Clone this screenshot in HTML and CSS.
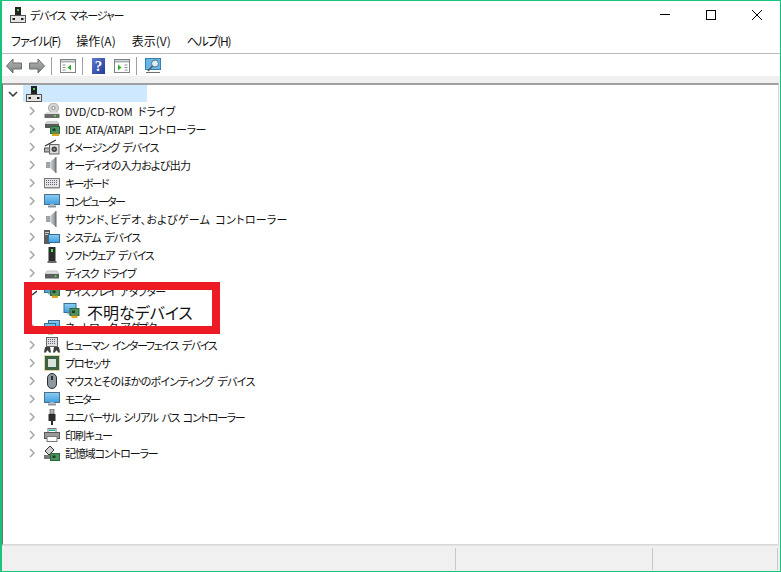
FILE: index.html
```html
<!DOCTYPE html>
<html lang="ja">
<head>
<meta charset="utf-8">
<title>デバイス マネージャー</title>
<link rel="stylesheet" href="styles.css">
</head>
<body>
<svg class="defs" width="0" height="0">
  <defs>
    <linearGradient id="g-arrow" x1="0" y1="0" x2="0" y2="1"><stop offset="0" stop-color="#b4b8b6"/><stop offset="1" stop-color="#7c807e"/></linearGradient>
    <linearGradient id="g-screen" x1="0" y1="0" x2="0" y2="1"><stop offset="0" stop-color="#8ccdf2"/><stop offset="1" stop-color="#3f9fe0"/></linearGradient>
    <linearGradient id="g-help" x1="0" y1="0" x2="1" y2="1"><stop offset="0" stop-color="#5c78cc"/><stop offset="1" stop-color="#243c98"/></linearGradient>
    <linearGradient id="g-spk" x1="0" y1="0" x2="1" y2="0"><stop offset="0" stop-color="#d8dadc"/><stop offset="1" stop-color="#7e8286"/></linearGradient>
    <symbol id="i-root" viewBox="0 0 16 16"><rect x="5" y="0" width="6" height="8" fill="#222"/><rect x="7" y="2" width="2" height="2" fill="#5c5"/><rect x="0.500" y="8.500" width="15" height="7" fill="#e4e4e4" stroke="#555"/><rect x="2.500" y="11" width="2.500" height="2" fill="#222"/><rect x="11" y="11" width="2.500" height="2" fill="#222"/></symbol>
    <symbol id="i-dvd" viewBox="0 0 16 16"><circle cx="9.500" cy="5" r="5" fill="#d4d4d4" stroke="#a8a8a8"/><circle cx="9.500" cy="5" r="1.600" fill="#fff" stroke="#888"/><path d="M3 9h11l2 2H0z" fill="#e0e0e0"/><rect x="0.500" y="11" width="15" height="4" fill="#6a6a6a"/><rect x="10" y="12" width="2" height="1.500" fill="#4e4"/></symbol>
    <symbol id="i-ide" viewBox="0 0 16 16"><path d="M3 0h10l2 3H1z" fill="#d8d8d8" stroke="#aaa" stroke-width=".5"/><rect x="1" y="3" width="14" height="4" fill="#5a5a5a"/><rect x="6.500" y="5.500" width="9" height="7" fill="#4c9060" stroke="#2c6a3c"/><rect x="8" y="12.500" width="7" height="2.500" fill="#d8a820"/><rect x="8.500" y="7.500" width="3" height="2.500" fill="#1d3d28"/></symbol>
    <symbol id="i-cam" viewBox="0 0 16 16"><path d="M1 7 12 1" stroke="#333" stroke-width="1.200"/><rect x="0.500" y="9" width="5" height="4" fill="#b4b4b4" stroke="#555"/><rect x="5.500" y="5.500" width="9.500" height="9.500" fill="#dcdcdc" stroke="#666"/><circle cx="10.300" cy="10.300" r="2.700" fill="#444"/><circle cx="10.300" cy="10.300" r="1" fill="#8ab"/></symbol>
    <symbol id="i-spk" viewBox="0 0 16 16"><rect x="2" y="5" width="4" height="6" fill="#a0a4a8"/><path d="M6 5l6-5v16l-6-5z" fill="url(#g-spk)"/><path d="M12 0v16" stroke="#666"/></symbol>
    <symbol id="i-kbd" viewBox="0 0 16 16"><rect x="0.500" y="3.500" width="15" height="9" fill="#e2e4e8" stroke="#777"/><path d="M2 5.500h12M2 7.500h12M2 9.500h12" stroke="#667" stroke-dasharray="1 1"/><rect x="0.500" y="12" width="15" height="1.500" fill="#8a8a8a"/></symbol>
    <symbol id="i-mon" viewBox="0 0 16 16"><rect x="0.500" y="1.500" width="15" height="10" fill="url(#g-screen)" stroke="#4a6f8c"/><path d="M4 13.500h8" stroke="#8a94a0" stroke-width="2"/><path d="M6 12h4" stroke="#b0b8c0" stroke-width="2"/></symbol>
    <symbol id="i-sys" viewBox="0 0 16 16"><rect x="0" y="1" width="6" height="14" fill="#5c5c5c"/><rect x="1" y="3" width="4" height="1" fill="#ccc"/><rect x="1" y="5" width="4" height="1" fill="#ccc"/><rect x="4.500" y="5.500" width="11" height="8" fill="url(#g-screen)" stroke="#2f6f96"/></symbol>
    <symbol id="i-sw" viewBox="0 0 16 16"><rect x="4.500" y="0" width="7" height="14" fill="#2c2c2c"/><rect x="7" y="2" width="2" height="3" fill="#4e4"/><rect x="3.500" y="14" width="9" height="2" fill="#6a6a6a"/></symbol>
    <symbol id="i-disk" viewBox="0 0 16 16"><path d="M3 6h10l2 3H1z" fill="#e0e0e0" stroke="#aaa" stroke-width=".6"/><rect x="1" y="9" width="14" height="4.500" fill="#5e5e5e"/><rect x="10.500" y="10.500" width="2" height="1.500" fill="#4e4"/></symbol>
    <symbol id="i-disp" viewBox="0 0 16 16"><rect x="0.500" y="0.500" width="12" height="9" fill="url(#g-screen)" stroke="#3a6f90"/><rect x="4" y="9.500" width="3" height="2" fill="#9ab"/><rect x="6.500" y="5.500" width="9" height="7" fill="#4c9060" stroke="#2c6a3c"/><rect x="8" y="12.500" width="6" height="2.500" fill="#e0aa20"/><rect x="8.500" y="7.500" width="3" height="2.500" fill="#1d3d28"/></symbol>
    <symbol id="i-net" viewBox="0 0 16 16"><rect x="4.500" y="1.500" width="11" height="8" fill="url(#g-screen)" stroke="#3a6f90"/><rect x="0.500" y="4.500" width="11" height="8" fill="#6cc0f0" stroke="#3a6f90"/><rect x="4" y="13" width="5" height="2.500" fill="#5b5"/></symbol>
    <symbol id="i-hid" viewBox="0 0 16 16"><rect x="2.500" y="0.500" width="11" height="9" fill="#dfe1e6" stroke="#666"/><path d="M4 2.500h8M4 4.500h8M4 6.500h8" stroke="#667" stroke-dasharray="1 1"/><path d="M0 15.500 1 10h5l1 5.500H5l-1-2H3l-1 2zM9 15.500 10 10h5l1 5.500h-2l-1-2h-1l-1 2z" fill="#3c3c3c"/></symbol>
    <symbol id="i-cpu" viewBox="0 0 16 16"><rect x="1" y="1" width="14" height="14" fill="#3c5f48" /><rect x="0.500" y="0.500" width="15" height="15" fill="none" stroke="#c8a83c" stroke-dasharray="1 1"/><rect x="4" y="4" width="8" height="8" fill="#dbe2de"/></symbol>
    <symbol id="i-mouse" viewBox="0 0 16 16"><rect x="3.500" y="0.500" width="9" height="15" rx="4.500" fill="#8e98a0" stroke="#2c2c2c"/><rect x="7" y="3" width="2" height="4" fill="#2c2c2c"/></symbol>
    <symbol id="i-usb" viewBox="0 0 16 16"><rect x="6" y="0" width="4" height="5" fill="#b4b4b4" stroke="#444" stroke-width=".6"/><rect x="4.500" y="5" width="7" height="7" fill="#2c2c2c"/><rect x="7" y="12" width="2" height="4" fill="#2c2c2c"/></symbol>
    <symbol id="i-prn" viewBox="0 0 16 16"><rect x="4" y="1.500" width="8" height="4" fill="#fff" stroke="#777"/><rect x="5" y="2.500" width="6" height="1.500" fill="#2a9"/><rect x="0.500" y="5.500" width="15" height="6" fill="#9a9a9a" stroke="#555"/><rect x="3" y="9.500" width="10" height="5" fill="#fff" stroke="#777"/></symbol>
    <symbol id="i-stor" viewBox="0 0 16 16"><path d="M1 6 6 1l4 4-5 5z" fill="#d0d0d0" stroke="#333"/><rect x="0" y="10" width="8" height="4" fill="#777"/><rect x="6.500" y="8.500" width="9" height="7" fill="#4c9060" stroke="#2c6a3c"/><rect x="8.500" y="10.500" width="3" height="2.500" fill="#1d3d28"/></symbol>
  </defs>
</svg>
<div class="window">
  <header class="titlebar">
    <svg class="app-icon"><use href="#i-root"/></svg>
    <span class="title">デバイス マネージャー</span>
    <div class="caption">
      <svg class="cap" viewBox="0 0 12 12"><path d="M1 5.500h10" stroke="#000"/></svg>
      <svg class="cap" viewBox="0 0 12 12"><rect x="1.500" y="1.500" width="9" height="9" fill="none" stroke="#000"/></svg>
      <svg class="cap" viewBox="0 0 12 12"><path d="M1 1l10 10M11 1 1 11" stroke="#000"/></svg>
    </div>
  </header>
  <nav class="menubar">
    <span class="kana">ファイル(F)</span><span>操作(A)</span><span>表示(V)</span><span class="help-menu">ヘルプ(H)</span>
  </nav>
  <div class="toolbar">
    <svg class="tool back" viewBox="0 0 16 16"><path d="M.5 8 7 1v4h8.500v6H7v4z" fill="url(#g-arrow)" stroke="#6a6e6c"/></svg>
    <svg class="tool" viewBox="0 0 16 16"><path d="M15.500 8 9 1v4H.5v6H9v4z" fill="url(#g-arrow)" stroke="#6a6e6c"/></svg>
    <i class="sep"></i>
    <svg class="tool" viewBox="0 0 16 16"><rect x="0.500" y="1.500" width="15" height="13" fill="#fff" stroke="#7c8488"/><path d="M1 3.500h14" stroke="#a8b0b4" stroke-width="2"/><path d="M2.500 7h3M2.500 9.500h3M2.500 12h3" stroke="#8a9296"/><path d="M11 6.500v6L7.500 9.500z" fill="#2fae2f"/></svg>
    <i class="sep"></i>
    <svg class="tool help" viewBox="0 0 13 16"><rect width="13" height="16" fill="url(#g-help)"/><text x="6.500" y="13" class="q">?</text></svg>
    <svg class="tool" viewBox="0 0 16 16"><rect x="0.500" y="1.500" width="15" height="13" fill="#fff" stroke="#7c8488"/><path d="M1 3.500h14" stroke="#a8b0b4" stroke-width="2"/><path d="M10.500 7h3M10.500 9.500h3M10.500 12h3" stroke="#8a9296"/><path d="M4 6.500v6l3.500-3z" fill="#2fae2f"/></svg>
    <i class="sep"></i>
    <svg class="tool" viewBox="0 0 16 16"><rect x="0.500" y="0.500" width="15" height="11" fill="#62b8ec" stroke="#3a7fa8"/><circle cx="10" cy="5.500" r="3.500" fill="#d8eef9" stroke="#6a7074"/><path d="M7.500 8 3 13" stroke="#555" stroke-width="1.500"/><path d="M1 14.500h14" stroke="#6a7074"/></svg>
  </div>
  <div class="band"></div>
  <main class="tree">
    <div class="row root">
      <svg class="arrow open" viewBox="0 0 10 10"><path d="M1 3l4 4 4-4"/></svg>
      <div class="root-sel"><svg class="icon"><use href="#i-root"/></svg></div>
    </div>
    <ul class="list">
      <li class="row"><svg class="arrow" viewBox="0 0 10 10"><path d="M3 1l4 4-4 4"/></svg><svg class="icon"><use href="#i-dvd"/></svg><span class="latin">DVD/CD-ROM ドライブ</span></li>
      <li class="row"><svg class="arrow" viewBox="0 0 10 10"><path d="M3 1l4 4-4 4"/></svg><svg class="icon"><use href="#i-ide"/></svg><span class="ide">IDE ATA/ATAPI コントローラー</span></li>
      <li class="row"><svg class="arrow" viewBox="0 0 10 10"><path d="M3 1l4 4-4 4"/></svg><svg class="icon"><use href="#i-cam"/></svg><span>イメージング デバイス</span></li>
      <li class="row"><svg class="arrow" viewBox="0 0 10 10"><path d="M3 1l4 4-4 4"/></svg><svg class="icon"><use href="#i-spk"/></svg><span class="wide">オーディオの入力および出力</span></li>
      <li class="row"><svg class="arrow" viewBox="0 0 10 10"><path d="M3 1l4 4-4 4"/></svg><svg class="icon"><use href="#i-kbd"/></svg><span class="tight">キーボード</span></li>
      <li class="row"><svg class="arrow" viewBox="0 0 10 10"><path d="M3 1l4 4-4 4"/></svg><svg class="icon"><use href="#i-mon"/></svg><span class="tight">コンピューター</span></li>
      <li class="row"><svg class="arrow" viewBox="0 0 10 10"><path d="M3 1l4 4-4 4"/></svg><svg class="icon"><use href="#i-spk"/></svg><span class="sound">サウンド、ビデオ、およびゲーム コントローラー</span></li>
      <li class="row"><svg class="arrow" viewBox="0 0 10 10"><path d="M3 1l4 4-4 4"/></svg><svg class="icon"><use href="#i-sys"/></svg><span>システム デバイス</span></li>
      <li class="row"><svg class="arrow" viewBox="0 0 10 10"><path d="M3 1l4 4-4 4"/></svg><svg class="icon"><use href="#i-sw"/></svg><span>ソフトウェア デバイス</span></li>
      <li class="row"><svg class="arrow" viewBox="0 0 10 10"><path d="M3 1l4 4-4 4"/></svg><svg class="icon"><use href="#i-disk"/></svg><span>ディスク ドライブ</span></li>
      <li class="row"><svg class="arrow exp" viewBox="0 0 10 10"><path d="M5 9l5-4"/></svg><svg class="icon"><use href="#i-disp"/></svg><span>ディスプレイ アダプター</span></li>
      <li class="row"></li>
      <li class="row"><svg class="arrow" viewBox="0 0 10 10"><path d="M3 1l4 4-4 4"/></svg><svg class="icon"><use href="#i-net"/></svg><span>ネットワーク アダプター</span></li>
      <li class="row"><svg class="arrow" viewBox="0 0 10 10"><path d="M3 1l4 4-4 4"/></svg><svg class="icon"><use href="#i-hid"/></svg><span class="narrow">ヒューマン インターフェイス デバイス</span></li>
      <li class="row"><svg class="arrow" viewBox="0 0 10 10"><path d="M3 1l4 4-4 4"/></svg><svg class="icon"><use href="#i-cpu"/></svg><span>プロセッサ</span></li>
      <li class="row"><svg class="arrow" viewBox="0 0 10 10"><path d="M3 1l4 4-4 4"/></svg><svg class="icon"><use href="#i-mouse"/></svg><span class="wide">マウスとそのほかのポインティング デバイス</span></li>
      <li class="row"><svg class="arrow" viewBox="0 0 10 10"><path d="M3 1l4 4-4 4"/></svg><svg class="icon"><use href="#i-mon"/></svg><span class="tight">モニター</span></li>
      <li class="row"><svg class="arrow" viewBox="0 0 10 10"><path d="M3 1l4 4-4 4"/></svg><svg class="icon"><use href="#i-usb"/></svg><span class="narrow">ユニバーサル シリアル バス コントローラー</span></li>
      <li class="row"><svg class="arrow" viewBox="0 0 10 10"><path d="M3 1l4 4-4 4"/></svg><svg class="icon"><use href="#i-prn"/></svg><span>印刷キュー</span></li>
      <li class="row"><svg class="arrow" viewBox="0 0 10 10"><path d="M3 1l4 4-4 4"/></svg><svg class="icon"><use href="#i-stor"/></svg><span>記憶域コントローラー</span></li>
    </ul>
    <div class="callout">
      <svg class="callout-icon"><use href="#i-disp"/></svg>
      <span class="callout-text">不明なデバイス</span>
    </div>
  </main>
  <footer class="statusbar">
    <div class="st st1"></div><div class="st st2"></div><div class="st st3"></div>
  </footer>
</div>
</body>
</html>
```
FILE: styles.css
```css
html, body { margin: 0; padding: 0; height: 100%; overflow: hidden; }
body { font-family: "Noto Sans CJK JP", "Liberation Sans", sans-serif; font-feature-settings: "palt"; color: #111; background: #fff; }
.defs { position: absolute; }
.window { box-sizing: border-box; width: 781px; height: 572px; border: 1px solid #19c37d; border-left-width: 2px; display: flex; flex-direction: column; background: #fff; }
.titlebar { height: 28px; display: flex; align-items: center; padding-left: 8px; flex: none; }
.app-icon { width: 16px; height: 16px; flex: none; }
.title { font-size: 11px; line-height: 16px; margin-left: 4px; letter-spacing: -1.200px; word-spacing: 3px; }
.caption { margin-left: auto; display: flex; align-items: center; padding-right: 17px; gap: 34px; }
.cap { width: 12px; height: 12px; }
.menubar { height: 24px; flex: none; display: flex; gap: 16px; align-items: center; padding-left: 9px; font-size: 12px; line-height: 16px; border-bottom: 1px solid #b9b9c3; }
.menubar .kana { letter-spacing: -1px; }
.menubar .help-menu { letter-spacing: -1.300px; }
.toolbar { height: 22px; flex: none; display: flex; align-items: center; padding: 2px 0 0 4px; box-sizing: border-box; background: #fff; }
.tool { width: 16px; height: 16px; flex: none; }
.tool.back { margin-right: 7px; }
.tool.help { width: 13px; margin: 0 9px 0 1px; }
.sep { width: 1px; height: 18px; background: #a0a0a0; margin: 0 8px 0 6px; }
.q { font: bold 15px "Liberation Serif", serif; fill: #fff; text-anchor: middle; }
.band { height: 7px; flex: none; background: #f0f0f0; }
.tree { position: relative; flex: 1; min-height: 0; background: #fff; border-top: 2px solid #a0a0a0; border-left: 1px solid #6e6e6e; border-bottom: 1px solid #d8d8d8; border-right: 1px solid #d8d8d8; margin-right: 1px; }
.row { height: 18px; display: flex; align-items: center; font-size: 11px; line-height: 16px; white-space: nowrap; padding-left: 24px; }
.row span { letter-spacing: -1.100px; word-spacing: 2.500px; }
.row span.latin { letter-spacing: 0; }
.row span.ide { letter-spacing: -0.400px; }
.row span.sound { letter-spacing: 0.250px; }
.row span.wide { letter-spacing: -0.700px; }
.row span.narrow { letter-spacing: -1.300px; }
.row span.tight { letter-spacing: -1.700px; }
.list { list-style: none; margin: 0; padding: 0; }
.row.root { height: 17px; padding-left: 5px; }
.root-sel { width: 121px; height: 17px; padding-left: 3px; background: #cde8ff; display: flex; align-items: center; }
.arrow { width: 10px; height: 10px; flex: none; margin-right: 7px; fill: none; stroke: #a6a6a6; stroke-width: 1.500; }
.arrow.open { stroke: #333; margin-right: 5px; }
.arrow.exp { stroke: #333; }
.icon { width: 16px; height: 16px; flex: none; margin-right: 5px; }
.callout { position: absolute; left: 21px; top: 197px; width: 196px; height: 52px; box-sizing: border-box; border: 8px solid #ed1c24; display: flex; align-items: center; }
.callout-icon { width: 17px; height: 16px; margin-left: 31px; margin-top: 6px; flex: none; }
.callout-text { font-size: 16px; line-height: 14px; margin-left: 7px; margin-top: 8px; color: #111; }
.statusbar { height: 25px; flex: none; display: flex; background: #f0f0f0; border-top: 1px solid #e3e3e3; }
.st { box-sizing: border-box; margin: 2px 0 1px; border-right: 1px solid #c8c8c8; }
.st1 { width: 454px; }
.st2 { width: 197px; }
.st3 { flex: 1; margin-right: 2px; }
```
